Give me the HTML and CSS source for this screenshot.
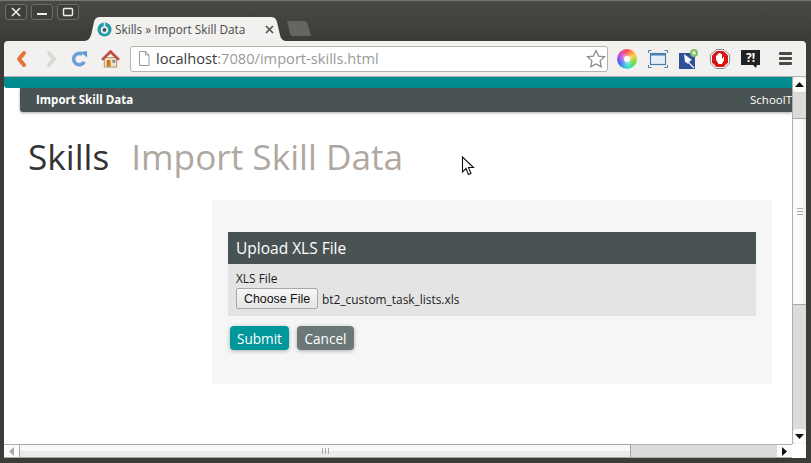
FILE: index.html
```html
<!DOCTYPE html>
<html>
<head>
  <title>Skills » Import Skill Data</title>
  <link rel="stylesheet" href="styles.css">
</head>
<body>
  <div class="window">
    <div class="titlebar">
      <div class="win-buttons">
        <span class="win-btn"><svg width="12" height="12" viewBox="0 0 12 12"><path d="M2 2l8 8M10 2l-8 8" stroke="#eeeeec" stroke-width="1.6"/></svg></span>
        <span class="win-btn"><svg width="12" height="12" viewBox="0 0 12 12"><path d="M1 8h10" stroke="#eeeeec" stroke-width="2"/></svg></span>
        <span class="win-btn"><svg width="12" height="12" viewBox="0 0 12 12"><rect x="1.5" y="2.5" width="9" height="7" rx="1" fill="none" stroke="#eeeeec" stroke-width="1.4"/></svg></span>
      </div>
      <div class="tab">
        <svg class="favicon" width="15" height="15" viewBox="0 0 16 16"><circle cx="8" cy="8" r="7.500" fill="#1d9ba8"/><circle cx="8" cy="8.500" r="4" fill="#e8eeee"/><circle cx="8" cy="8.500" r="2" fill="#3c4f52"/><rect x="7.200" y="0.500" width="1.600" height="5" fill="#e8eeee"/></svg>
        <span class="tab-title">Skills » Import Skill Data</span>
        <svg class="tab-close" width="9" height="9" viewBox="0 0 9 9"><path d="M1 1l7 7M8 1l-7 7" stroke="#55534f" stroke-width="1.7"/></svg>
      </div>
      <div class="new-tab"></div>
    </div>

    <div class="toolbar">
      <svg class="nav-icon" width="16" height="20" viewBox="0 0 16 20"><path d="M11 4L6 10l5 6" fill="none" stroke="#e8713a" stroke-width="4" stroke-linejoin="round" stroke-linecap="round"/></svg>
      <svg class="nav-icon forward" width="16" height="20" viewBox="0 0 16 20"><path d="M5 4l5 6-5 6" fill="none" stroke="#dbd9d5" stroke-width="4" stroke-linejoin="round" stroke-linecap="round"/></svg>
      <svg class="nav-icon reload" width="17" height="17" viewBox="0 0 18 18"><path d="M14 12.500A6 6 0 1 1 12 4.500" fill="none" stroke="#6ba1d8" stroke-width="3.800"/><path d="M10 2l7-1v7z" fill="#5f9bd6"/></svg>
      <svg class="nav-icon home" width="19" height="19" viewBox="0 0 20 19"><path d="M3.500 8.500h13v10h-13z" fill="#efe3c8" stroke="#a8946f"/><path d="M0.500 10L10 .5l9.500 9.500-1.500 1.500L10 4 2 11.500z" fill="#c2483c" stroke="#a2352b" stroke-width=".5"/><rect x="6" y="11" width="4" height="7" fill="#c9761f"/><rect x="12" y="11" width="3" height="3" fill="#7d8c99"/></svg>
      <div class="omnibox">
        <svg width="12" height="15" viewBox="0 0 12 15"><path d="M1.500.5h6l3.500 3.500v10.500h-9.500z" fill="#fff" stroke="#9a9a9a"/><path d="M7.500.5v3.500h3.500" fill="none" stroke="#9a9a9a"/></svg>
        <span class="url"><b>localhost</b>:7080/import-skills.html</span>
        <svg class="star" width="20" height="19" viewBox="0 0 20 19"><path d="M10 1.500l2.600 5.600 6 .7-4.500 4.100 1.200 6L10 15l-5.300 2.900 1.200-6L1.400 7.800l6-.7z" fill="#fff" stroke="#8a8a8a" stroke-width="1.200"/></svg>
      </div>
      <div class="ext-icons">
        <span class="color-wheel"><span class="color-wheel-hole"></span></span>
        <svg width="20" height="18" viewBox="0 0 20 18"><rect x="2.500" y="3.500" width="15" height="11" fill="#e6edf4" stroke="#4a80b0" stroke-width="1.200"/><rect x="2.500" y="3.500" width="15" height="2" fill="#4a80b0"/><path d="M.5 3V.5h3M16.500.5h3v2.500M.5 15v2.500h3M16.500 17.500h3V15" fill="none" stroke="#4a80b0"/></svg>
        <svg width="20" height="20" viewBox="0 0 20 20"><rect x="0" y="4" width="16" height="16" fill="#2f4f9a"/><path d="M5 5l8 6-2 1-2 3-1-1-2-1z" fill="#f4f6fa"/><path d="M8 12l7 7" stroke="#f4f6fa" stroke-width="1.300"/><circle cx="15" cy="4" r="4" fill="#7fbf6a"/><path d="M13 4h4M15 2v4" stroke="#fff"/></svg>
        <svg width="20" height="20" viewBox="0 0 20 20"><path d="M6 .5h8L19.500 6v8L14 19.500H6L.5 14V6z" fill="#fff" stroke="#888"/><path d="M6.500 2h7L18 6.500v7L13.500 18h-7L2 13.500v-7z" fill="#d81414"/><path d="M6 10.500V6.500h1.500v2.500V4.500H9V9V4h1.500v5-4H12v4.500h1V8h1v3l-2 4H8.500z" fill="#fff"/></svg>
        <span class="help-icon">?!</span>
        <span class="menu-icon"><i></i><i></i><i></i></span>
      </div>
    </div>

    <div class="viewport">
      <div class="page">
        <div class="top-strip"></div>
        <div class="navbar">
          <span class="nav-title">Import Skill Data</span>
          <span class="nav-school">SchoolT</span>
        </div>
        <div class="page-head">
          <h1>Skills</h1>
          <h2>Import Skill Data</h2>
          <svg class="cursor" width="14" height="21" viewBox="0 0 14 21"><path d="M1.500 1v15l3.500-3.500 2.500 6 2.500-1-2.500-6h5z" fill="#fff" stroke="#111" stroke-width="1.100"/></svg>
        </div>
        <div class="content">
          <div class="panel">
            <div class="panel-head">Upload XLS File</div>
            <div class="panel-body">
              <label for="xls">XLS File</label>
              <div class="file-row">
                <button id="xls" class="file-btn">Choose File</button>
                <span>bt2_custom_task_lists.xls</span>
              </div>
            </div>
          </div>
          <div class="actions">
            <button class="btn submit">Submit</button>
            <button class="btn cancel">Cancel</button>
          </div>
        </div>
      </div>
      <div class="vscroll">
        <span class="arrow-btn"><svg width="9" height="5" viewBox="0 0 9 5"><path d="M4.500 0L9 5H0z" fill="#111"/></svg></span>
        <div class="v-trough"></div>
        <div class="v-thumb"><span class="grip-v"></span></div>
        <div class="v-trough fill"></div>
        <span class="arrow-btn"><svg width="9" height="5" viewBox="0 0 9 5"><path d="M0 0h9L4.500 5z" fill="#111"/></svg></span>
      </div>
    </div>

    <div class="hscroll">
      <span class="arrow-btn-h"><svg width="5" height="9" viewBox="0 0 5 9"><path d="M5 0v9L0 4.500z" fill="#aaa"/></svg></span>
      <div class="h-thumb"><span class="grip-h"></span></div>
      <div class="h-trough"></div>
      <span class="arrow-btn-h"><svg width="5" height="9" viewBox="0 0 5 9"><path d="M0 0v9l5-4.500z" fill="#111"/></svg></span>
      <div class="scroll-corner"></div>
    </div>
  </div>
</body>
</html>
```

FILE: styles.css
```css
* {
  box-sizing: border-box;
}

html, body {
  margin: 0;
  padding: 0;
  overflow: hidden;
}

body {
  font-family: "Open Sans", "Noto Sans", sans-serif;
  background-color: #3c3b37;
}

.window {
  width: 811px;
  height: 463px;
  display: flex;
  flex-direction: column;
  padding: 0 5px 5px 4px;
  background: linear-gradient(#4a4945, #3c3b37 40px);
  border-top: 1px solid #77756f;
}

/* title bar and tabs */
.titlebar {
  height: 40px;
  flex: none;
  display: flex;
  align-items: flex-end;
  position: relative;
}

.win-buttons {
  position: absolute;
  left: 1px;
  top: 3px;
  display: flex;
  gap: 4px;
}

.win-btn {
  width: 22px;
  height: 16px;
  border: 1px solid #6e6c66;
  border-radius: 3px;
  display: flex;
  align-items: center;
  justify-content: center;
  background-color: #3f3e3a;
}

.tab {
  margin-left: 80px;
  width: 203px;
  height: 24px;
  display: flex;
  align-items: center;
  padding: 0 13px 0 13px;
  background-color: #f2f1f0;
  clip-path: path('M0 24 C5 24 7 20 8 14 L10 5 C11 1 13 0 17 0 L186 0 C190 0 192 1 193 5 L196 18 C197 22 199 24 203 24 Z');
  font-size: 11.8px;
  color: #4a4945;
}

.favicon {
  flex: none;
  margin-right: 3px;
}

.tab-title {
  flex: 1;
  white-space: nowrap;
}

.new-tab {
  width: 25px;
  height: 15px;
  margin: 0 0 5px 0;
  background-color: #666561;
  clip-path: path('M0 0 L15 0 C19 0 20 1 21 4 L24 15 L6 15 C3 15 3 12 2 8 Z');
}

/* toolbar */
.toolbar {
  height: 36px;
  flex: none;
  display: flex;
  align-items: center;
  padding-left: 9px;
  background-color: #f2f1f0;
  border-bottom: 1px solid #b5b3b0;
  border-radius: 4px 4px 0 0;
}

.nav-icon {
  flex: none;
}

.forward {
  margin-left: 15px;
}

.reload {
  margin-left: 11px;
}

.home {
  margin-left: 13px;
}

.omnibox {
  width: 478px;
  height: 26px;
  margin-left: 10px;
  padding: 0 1px 0 7px;
  display: flex;
  align-items: center;
  background-color: #fff;
  border: 1px solid #b5b3ae;
  border-radius: 3px;
}

.url {
  flex: 1;
  margin-left: 6px;
  padding-bottom: 2px;
  font-size: 14.63px;
  color: #9a9a9a;
  white-space: nowrap;
}

.url b {
  font-weight: 400;
  color: #3a3a3a;
}

.ext-icons {
  display: flex;
  align-items: center;
  margin-left: 9px;
  gap: 11px;
}

.color-wheel {
  width: 20px;
  height: 20px;
  border-radius: 50%;
  display: flex;
  align-items: center;
  justify-content: center;
  background: conic-gradient(#f44, #fc3, #6d4, #3dd, #46e, #c4d, #f44);
}

.color-wheel-hole {
  width: 6px;
  height: 6px;
  border-radius: 50%;
  background-color: #fff;
  box-shadow: 0 0 4px 2px rgba(255, 255, 255, 0.6);
}

.help-icon {
  position: relative;
  width: 19px;
  height: 15px;
  background-color: #222;
  color: #fff;
  font-size: 12px;
  font-weight: 700;
  line-height: 15px;
  text-align: center;
  margin-top: -2px;
}

.help-icon::after {
  content: "";
  position: absolute;
  left: 12px;
  top: 15px;
  border-top: 3px solid #222;
  border-left: 3px solid transparent;
  border-right: 1px solid transparent;
}

.menu-icon {
  width: 13px;
  display: flex;
  flex-direction: column;
  gap: 2px;
  margin-left: 8px;
}

.menu-icon i {
  display: block;
  height: 3px;
  background-color: #4a4945;
  border-radius: 1px;
}

/* page area */
.viewport {
  flex: 1;
  min-height: 0;
  display: flex;
}

.page {
  width: 788px;
  overflow: hidden;
  background-color: #fff;
}

.top-strip {
  height: 11px;
  background-color: #008c8f;
  border-radius: 0 0 0 3px;
}

.navbar {
  height: 24px;
  margin-left: 16px;
  padding: 0 0 2px 16px;
  display: flex;
  align-items: center;
  justify-content: space-between;
  background-color: #495353;
  color: #fff;
  font-size: 11.5px;
  border-radius: 0 0 0 3px;
  box-shadow: 0 1px 3px rgba(0, 0, 0, 0.35);
  white-space: nowrap;
}

.nav-title {
  font-weight: 700;
}

.page-head {
  display: flex;
  align-items: baseline;
  height: 88px;
  padding: 21px 0 0 24px;
  position: relative;
}

.page-head h1,
.page-head h2 {
  margin: 0;
  font-size: 35.2px;
  font-weight: 400;
  line-height: 46px;
  white-space: nowrap;
}

.page-head h1 {
  color: #333;
}

.page-head h2 {
  margin-left: 22px;
  color: #b0a8a0;
}

.cursor {
  position: absolute;
  left: 457px;
  top: 44px;
}

.content {
  width: 560px;
  height: 184px;
  margin-left: 208px;
  padding: 32px 16px 0;
  background-color: #f6f6f6;
}

.panel-head {
  height: 32px;
  padding-left: 8px;
  background-color: #495353;
  color: #fff;
  font-size: 15.5px;
  line-height: 32px;
}

.panel-body {
  height: 52px;
  padding: 6px 8px 0;
  background-color: #e4e4e4;
  font-size: 11.9px;
  color: #1c1c1c;
}

.panel-body label {
  display: block;
  line-height: 16px;
}

.file-row {
  display: flex;
  align-items: center;
  gap: 4px;
  margin-top: 2px;
}

.file-btn {
  width: 82px;
  height: 21px;
  padding: 0;
  font-family: "Liberation Sans", Arial, sans-serif;
  font-size: 12.4px;
  color: #111;
  background: linear-gradient(#f6f6f6, #e6e6e6);
  border: 1px solid #a9a9a9;
  border-radius: 2px;
}

.actions {
  display: flex;
  gap: 8px;
  margin: 10px 0 0 2px;
}

.btn {
  height: 24px;
  border: none;
  border-radius: 4px;
  color: #fff;
  padding: 0;
  font-family: "Open Sans", "Noto Sans", sans-serif;
  font-size: 13.6px;
  box-shadow: 0 1px 4px rgba(0, 0, 0, 0.3);
}

.submit {
  width: 59px;
  background-color: #00979a;
}

.cancel {
  width: 57px;
  background-color: #6b7877;
}

/* scrollbars */
.vscroll {
  width: 14px;
  flex: none;
  display: flex;
  flex-direction: column;
  background-color: #dcdbd9;
  border-left: 1px solid #b0aeaa;
}

.arrow-btn {
  height: 15px;
  flex: none;
  display: flex;
  align-items: center;
  justify-content: center;
  background-color: #fbfbfa;
  border-radius: 3px;
}

.v-trough {
  height: 26px;
  flex: none;
  background-color: #dcdbd9;
}

.v-trough.fill {
  flex: 1;
}

.v-thumb {
  height: 187px;
  flex: none;
  display: flex;
  align-items: center;
  justify-content: center;
  border-top: 1px solid #a9a7a3;
  border-bottom: 1px solid #a9a7a3;
  background: linear-gradient(90deg, #fafafa 60%, #ecebe9);
}

.grip-v {
  width: 6px;
  height: 7px;
  border-top: 1px solid #aaa;
  border-bottom: 1px solid #aaa;
  background: linear-gradient(#aaa, #aaa) center / 100% 1px no-repeat;
}

.hscroll {
  height: 14px;
  flex: none;
  display: flex;
}

.arrow-btn-h {
  width: 15px;
  flex: none;
  display: flex;
  align-items: center;
  justify-content: center;
  background-color: #fbfbfa;
  border-top: 1px solid #b0aeaa;
  border-bottom: 1px solid #b0aeaa;
}

.h-thumb {
  width: 612px;
  flex: none;
  display: flex;
  align-items: center;
  justify-content: center;
  border: 1px solid #a9a7a3;
  background: linear-gradient(#f8f8f6 50%, #ebebe9 50%);
}

.grip-h {
  width: 7px;
  height: 6px;
  border-left: 1px solid #aaa;
  border-right: 1px solid #aaa;
  background: linear-gradient(#aaa, #aaa) center / 1px 100% no-repeat;
}

.h-trough {
  flex: 1;
  background-color: #dcdbd9;
  border-top: 1px solid #b0aeaa;
  border-bottom: 1px solid #b0aeaa;
}

.scroll-corner {
  width: 14px;
  flex: none;
  background-color: #fff;
}
```
